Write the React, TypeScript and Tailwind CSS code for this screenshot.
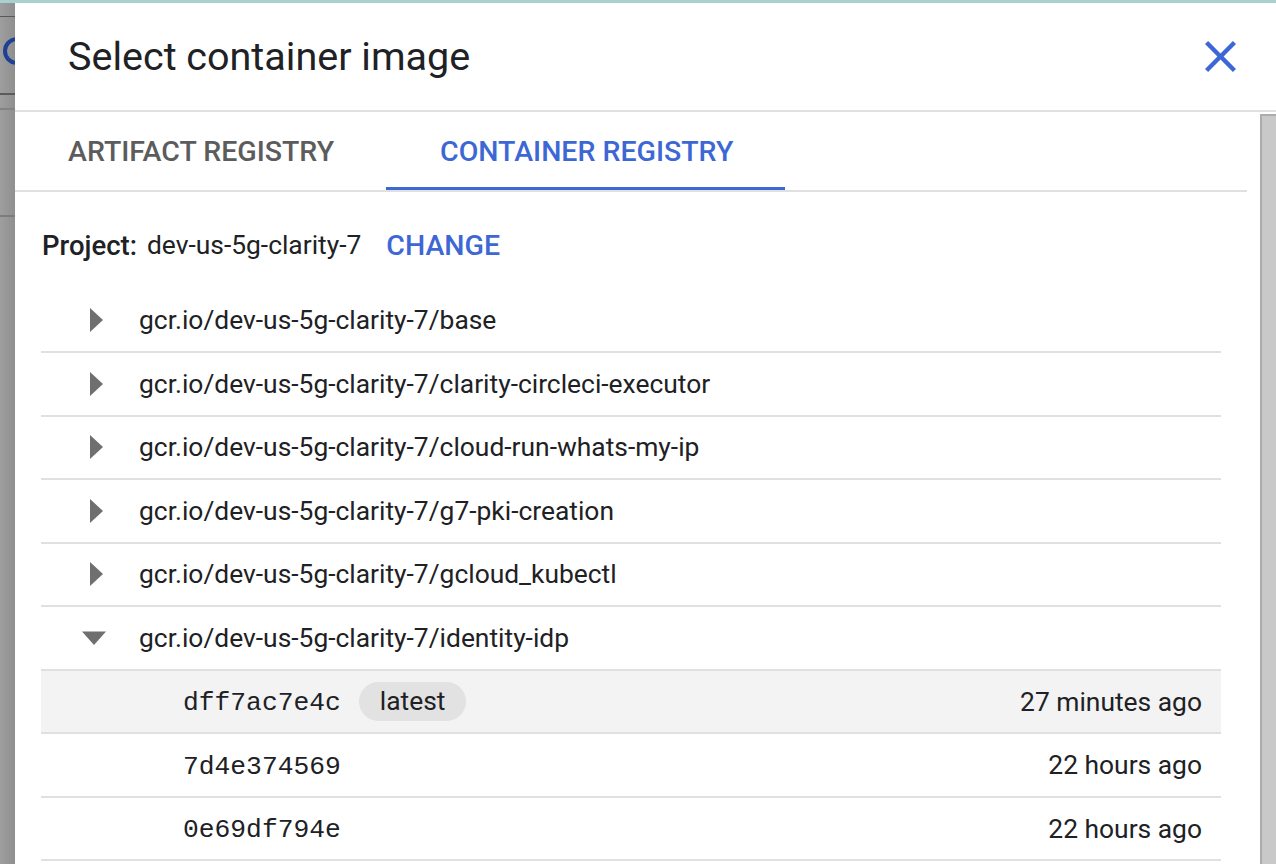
import React from 'react'

const images = [
  { name: 'gcr.io/dev-us-5g-clarity-7/base' },
  { name: 'gcr.io/dev-us-5g-clarity-7/clarity-circleci-executor' },
  { name: 'gcr.io/dev-us-5g-clarity-7/cloud-run-whats-my-ip' },
  { name: 'gcr.io/dev-us-5g-clarity-7/g7-pki-creation' },
  { name: 'gcr.io/dev-us-5g-clarity-7/gcloud_kubectl' },
  { name: 'gcr.io/dev-us-5g-clarity-7/identity-idp', open: true },
]

const digests = [
  { id: 'dff7ac7e4c', tag: 'latest', when: '27 minutes ago', selected: true },
  { id: '7d4e374569', when: '22 hours ago' },
  { id: '0e69df794e', when: '22 hours ago' },
]

function Caret({ open }: { open?: boolean }) {
  return (
    <svg width="24" height="24" viewBox="0 0 24 24" className="shrink-0">
      {open ? (
        <polygon points="0,5.5 24,5.5 12,19" fill="#6f6f6f" />
      ) : (
        <polygon points="8,0 21,12 8,24" fill="#6f6f6f" />
      )}
    </svg>
  )
}

function BackdropStrip() {
  return (
    <div className="relative w-[15px] shrink-0 overflow-hidden bg-gradient-to-r from-[#9e9e9e] to-[#8f8f8f]">
      <div className="absolute left-0 right-0 top-[13px] h-px bg-[#585858]" />
      <div className="absolute left-0 right-0 top-[90px] h-[2px] bg-[#5a5a5a]" />
      <div className="absolute left-0 right-0 top-[105px] h-[2px] bg-[#838383]" />
      <div className="absolute left-0 right-0 top-[212px] h-[2px] bg-[#7c7c7c]" />
      <svg width="15" height="40" viewBox="0 0 15 40" className="absolute left-0 top-[28px]">
        <circle cx="17" cy="20" r="12" fill="none" stroke="#1f4193" strokeWidth="4" />
      </svg>
    </div>
  )
}

export default function App() {
  return (
    <div className="w-[1276px] h-[864px] overflow-hidden flex flex-col bg-white text-[#202124] font-['Roboto',sans-serif]">
      <div className="h-[3px] shrink-0 bg-[#a9cfd0]" />
      <div className="flex flex-1 min-h-0">
        <BackdropStrip />

        <div className="flex-1 flex flex-col min-w-0">
          {/* header */}
          <div className="h-[109px] shrink-0 flex items-center justify-between pl-[53px] pr-[40px] border-b-2 border-[#e0e0e0]">
            <h1 className="text-[39.5px] leading-none font-normal">Select container image</h1>
            <svg width="31" height="31" viewBox="5 5 14 14">
              <path
                fill="#3d67d4"
                d="M19 6.41L17.59 5 12 10.59 6.41 5 5 6.41 10.59 12 5 17.59 6.41 19 12 13.41 17.59 19 19 17.59 13.41 12z"
              />
            </svg>
          </div>

          <div className="flex flex-1 min-h-0">
            <div className="w-[1232px] shrink-0">
              {/* tabs */}
              <div className="flex border-b-2 border-[#e0e0e0]">
                <div className="h-[78px] pt-[3px] pl-[53px] pr-[52px] flex items-center text-[28.5px] font-medium text-[#5c5c5c]">
                  ARTIFACT REGISTRY
                </div>
                <div className="relative h-[78px] pt-[3px] pl-[54px] pr-[52px] flex items-center text-[28.5px] font-medium text-[#3d67d4]">
                  CONTAINER REGISTRY
                  <div className="absolute left-0 right-0 bottom-0 h-[3px] bg-[#3d67d4]" />
                </div>
              </div>

              {/* project */}
              <div className="pl-[27px] pt-[38px] h-[98px] flex items-start">
                <div className="h-[32px] flex items-center">
                  <span className="text-[27.5px] font-medium">Project:</span>
                  <span className="ml-[10px] text-[26.4px]">dev-us-5g-clarity-7</span>
                  <span className="ml-[25px] text-[28.5px] font-medium text-[#3d67d4]">CHANGE</span>
                </div>
              </div>

              {/* list */}
              <div className="mx-[26px] -mt-[0.5px]">
                {images.map((img) => (
                  <div key={img.name}>
                    <div className="h-[63.5px] flex items-center border-b-2 border-[#e0e0e0]">
                      <div className="ml-[41px] mr-[33px] flex items-center">
                        <Caret open={img.open} />
                      </div>
                      <span className="pt-[2px] text-[26.4px]">{img.name}</span>
                    </div>
                    {img.open &&
                      digests.map((d) => (
                        <div
                          key={d.id}
                          className={`h-[63.5px] pt-[3px] flex items-center border-b-2 border-[#e0e0e0] pl-[142px] pr-[19px] ${
                            d.selected ? 'bg-[#f3f3f3]' : ''
                          }`}
                        >
                          <span className="pt-[2px] text-[26.3px] font-['Liberation_Mono',monospace]">{d.id}</span>
                          {d.tag && (
                            <span className="ml-[18px] -mt-[3px] h-[39px] pt-[2px] px-[21px] rounded-full bg-[#e2e2e2] flex items-center text-[26.4px]">
                              {d.tag}
                            </span>
                          )}
                          <span className="ml-auto text-[26.4px]">{d.when}</span>
                        </div>
                      ))}
                  </div>
                ))}
              </div>
            </div>

            {/* scrollbar */}
            <div className="ml-auto mt-[2px] w-[16px] shrink-0 bg-[#c9c9c9] border-l-2 border-t-2 border-[#acacac]" />
          </div>
        </div>
      </div>
    </div>
  )
}
